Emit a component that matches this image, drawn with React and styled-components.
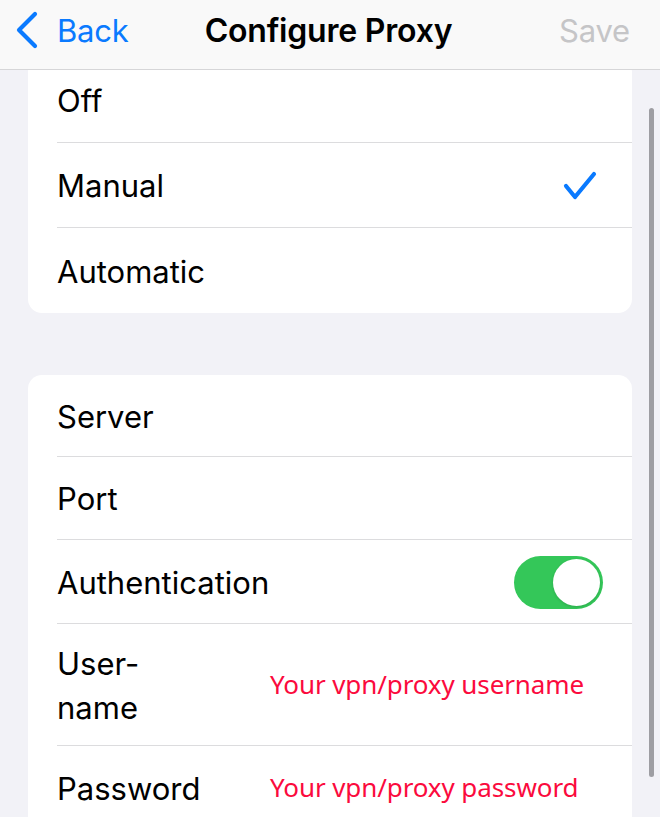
import React from "react";
import styled, { createGlobalStyle } from "styled-components";

const Global = createGlobalStyle`
  html, body { margin: 0; padding: 0; background: #f2f2f7; }
  body { font-family: Inter, "Liberation Sans", sans-serif; -webkit-font-smoothing: antialiased; }
`;

const Screen = styled.div`
  position: relative;
  width: 660px;
  height: 817px;
  overflow: hidden;
  background: #f2f2f7;
`;

const NavBar = styled.header`
  position: relative;
  z-index: 2;
  height: 70px;
  box-sizing: border-box;
  background: #f9f9f9;
  border-bottom: 1px solid #d6d6d8;
  display: grid;
  grid-template-columns: 1fr auto 1fr;
  align-items: center;
  padding: 0 30px 9px 15px;
`;

const BackButton = styled.div`
  display: flex;
  align-items: center;
  gap: 18px;
  color: #0a7aff;
  font-size: 31px;
  letter-spacing: -0.2px;
`;

const Title = styled.div`
  font-size: 32px;
  font-weight: 600;
  color: #000;
  letter-spacing: -0.2px;
  margin-left: 12px;
`;

const SaveButton = styled.div`
  justify-self: end;
  font-size: 31px;
  color: #c5c5c7;
  letter-spacing: -0.2px;
`;

const Content = styled.main`
  margin-top: -12px;
  padding: 0 28px;
  display: flex;
  flex-direction: column;
  gap: 62px;
`;

const Card = styled.section`
  background: #fff;
  border-radius: 14px;
  overflow: hidden;
`;

const Row = styled.div`
  display: flex;
  align-items: center;
  height: ${(p) => p.$h}px;
  margin-left: 29px;
  padding-right: ${(p) => p.$pr || 29}px;
  padding-top: 2px;
  box-sizing: border-box;
  border-bottom: ${(p) => (p.$last ? "none" : "1px solid #dcdcde")};
`;

const Label = styled.div`
  font-size: 31px;
  line-height: 44px;
  color: #000;
  width: ${(p) => p.$w || "auto"};
  flex: ${(p) => (p.$w ? "none" : "1")};
  letter-spacing: 0;
`;

const Hint = styled.div`
  font-family: "Noto Sans", "Open Sans", sans-serif;
  font-size: 26px;
  color: #fb0a3d;
  letter-spacing: -0.1px;
  margin-top: -4px;
`;

const Toggle = styled.div`
  width: 89px;
  height: 53px;
  border-radius: 27px;
  background: #34c759;
  position: relative;
  flex: none;
`;

const Knob = styled.div`
  position: absolute;
  top: 3px;
  right: 3px;
  width: 47px;
  height: 47px;
  border-radius: 50%;
  background: #fff;
  box-shadow: 0 1px 3px rgba(0, 0, 0, 0.15);
`;

const ScrollBar = styled.div`
  position: absolute;
  z-index: 3;
  left: 649px;
  top: 108px;
  width: 5px;
  height: 669px;
  border-radius: 3px;
  background: #9e9ea3;
`;

const Chevron = () => (
  <svg width="24" height="38" viewBox="0 0 24 38">
    <path d="M20 3 L4 19 L20 35" fill="none" stroke="#0a7aff" strokeWidth="4.2" strokeLinecap="round" strokeLinejoin="round" />
  </svg>
);

const Check = () => (
  <svg width="34" height="32" viewBox="0 0 34 32">
    <path d="M3 16 L12 27 L31 4" fill="none" stroke="#0a7aff" strokeWidth="4.2" strokeLinecap="round" strokeLinejoin="round" />
  </svg>
);

export default function App() {
  return (
    <Screen>
      <Global />
      <NavBar>
        <BackButton>
          <Chevron />
          <span>Back</span>
        </BackButton>
        <Title>Configure Proxy</Title>
        <SaveButton>Save</SaveButton>
      </NavBar>
      <Content>
        <Card>
          <Row $h={85}>
            <Label>Off</Label>
          </Row>
          <Row $h={85} $pr={35}>
            <Label>Manual</Label>
            <Check />
          </Row>
          <Row $h={85} $last>
            <Label>Automatic</Label>
          </Row>
        </Card>
        <Card>
          <Row $h={82}>
            <Label>Server</Label>
          </Row>
          <Row $h={83}>
            <Label>Port</Label>
          </Row>
          <Row $h={84}>
            <Label>Authentication</Label>
            <Toggle>
              <Knob />
            </Toggle>
          </Row>
          <Row $h={122}>
            <Label $w="213px">
              User-
              <br />
              name
            </Label>
            <Hint>Your vpn/proxy username</Hint>
          </Row>
          <Row $h={84} $last>
            <Label $w="213px">Password</Label>
            <Hint>Your vpn/proxy password</Hint>
          </Row>
        </Card>
      </Content>
      <ScrollBar />
    </Screen>
  );
}
